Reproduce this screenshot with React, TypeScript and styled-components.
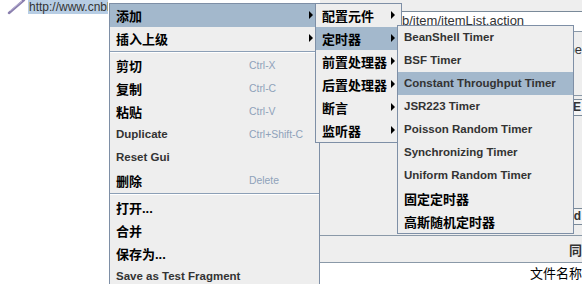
import React from "react";
import styled, { createGlobalStyle } from "styled-components";

const GlobalStyle = createGlobalStyle`
  html, body {
    margin: 0;
    padding: 0;
    background: #ffffff;
  }
  body {
    font-family: "Liberation Sans", "Noto Sans CJK SC", sans-serif;
  }
`;

const Screen = styled.div`
  position: relative;
  width: 582px;
  height: 284px;
  overflow: hidden;
  display: grid;
  grid-template-columns: 320px 262px;
  background: #ffffff;
`;

const LeftPane = styled.div`
  display: flex;
  flex-direction: column;
  background: #ffffff;
`;

const TopLine = styled.div`
  display: flex;
  align-items: center;
  height: 14px;
`;

const IconSlot = styled.div`
  width: 28px;
  height: 14px;
  flex: 0 0 28px;
`;

const UrlSelection = styled.div`
  width: 80px;
  height: 14px;
  overflow: hidden;
  padding-left: 1px;
  box-sizing: border-box;
  background: #b7cde4;
  color: #333333;
  font-size: 12px;
  line-height: 14px;
  white-space: nowrap;
`;

const RightPane = styled.div`
  display: flex;
  flex-direction: column;
  background: #eeeeee;
`;

const Strip = styled.div<{ $h: number }>`
  height: ${(p) => p.$h}px;
  flex: 0 0 ${(p) => p.$h}px;
  display: flex;
  align-items: center;
  justify-content: flex-end;
  overflow: hidden;
  color: #333333;
  font-size: 13px;
  white-space: nowrap;
`;

const UrlField = styled.div`
  height: 19px;
  flex: 0 0 19px;
  border-top: 1px solid #7a8a99;
  background: #ffffff;
  padding-left: 82px;
  color: #333333;
  font-size: 13px;
  line-height: 18px;
  white-space: nowrap;
`;

const Rule = styled.div`
  height: 0;
  border-top: 1px solid #8a99a8;
`;

const SmallBox = styled.span`
  display: inline-flex;
  align-items: center;
  height: 15px;
  padding: 0 2px;
  margin-right: -2px;
  border: 1px solid #7a8a99;
  background: #f4f4f4;
  font-size: 12px;
  font-weight: bold;
  color: #333333;
`;

const Filler = styled.div`
  flex: 1;
`;

const Footer = styled.div`
  flex: 0 0 21px;
  height: 21px;
  background: #ffffff;
  border-top: 1px solid #8a99a8;
  padding-left: 210px;
  font-size: 13px;
  line-height: 21px;
  color: #000000;
  white-space: nowrap;
`;

const Menu = styled.div<{ $x: number; $y: number; $w: number }>`
  position: absolute;
  left: ${(p) => p.$x}px;
  top: ${(p) => p.$y}px;
  width: ${(p) => p.$w}px;
  box-sizing: border-box;
  background: #eeeeee;
  border: 1px solid #7e8fa6;
  display: flex;
  flex-direction: column;
`;

const Item = styled.div<{ $active?: boolean }>`
  height: 23px;
  flex: 0 0 23px;
  box-sizing: border-box;
  display: flex;
  align-items: center;
  padding: 0 6px 1px;
  background: ${(p) => (p.$active ? "#a3b8cc" : "transparent")};
`;

const Label = styled.span<{ $cjk?: boolean; $w?: number }>`
  flex: ${(p) => (p.$w ? `0 0 ${p.$w}px` : "1")};
  font-weight: bold;
  font-size: ${(p) => (p.$cjk ? "13px" : "11.5px")};
  color: ${(p) => (p.$cjk ? "#000000" : "#333333")};
  white-space: nowrap;
`;

const Accel = styled.span`
  flex: 1;
  font-size: 10.4px;
  color: #8fa2ba;
  white-space: nowrap;
`;

const Arrow = styled.span`
  width: 0;
  height: 0;
  border-top: 4px solid transparent;
  border-bottom: 4px solid transparent;
  border-left: 4px solid #000000;
`;

const Separator = styled.div`
  height: 0;
  margin: 1px 0 1px;
  border-top: 1px solid #8c9fb6;
  border-bottom: 1px solid #ffffff;
`;

const Pencil = () => (
  <svg width="28" height="16" viewBox="0 0 28 16" style={{ position: "absolute", left: 0, top: 0 }}>
    <line x1="9" y1="13" x2="24" y2="0" stroke="#8a7fae" strokeWidth="2.4" strokeLinecap="round" />
    <line x1="10" y1="11" x2="22" y2="1" stroke="#c9c2e0" strokeWidth="0.8" />
  </svg>
);

type Entry =
  | { sep: true }
  | { label: string; cjk?: boolean; accel?: string; sub?: boolean; active?: boolean };

const mainMenu: Entry[] = [
  { label: "添加", cjk: true, sub: true, active: true },
  { label: "插入上级", cjk: true, sub: true },
  { sep: true },
  { label: "剪切", cjk: true, accel: "Ctrl-X" },
  { label: "复制", cjk: true, accel: "Ctrl-C" },
  { label: "粘贴", cjk: true, accel: "Ctrl-V" },
  { label: "Duplicate", accel: "Ctrl+Shift-C" },
  { label: "Reset Gui" },
  { label: "删除", cjk: true, accel: "Delete" },
  { sep: true },
  { label: "打开...", cjk: true },
  { label: "合并", cjk: true },
  { label: "保存为...", cjk: true },
  { label: "Save as Test Fragment" },
];

const addMenu: Entry[] = [
  { label: "配置元件", cjk: true, sub: true },
  { label: "定时器", cjk: true, sub: true, active: true },
  { label: "前置处理器", cjk: true, sub: true },
  { label: "后置处理器", cjk: true, sub: true },
  { label: "断言", cjk: true, sub: true },
  { label: "监听器", cjk: true, sub: true },
];

const timerMenu: Entry[] = [
  { label: "BeanShell Timer" },
  { label: "BSF Timer" },
  { label: "Constant Throughput Timer", active: true },
  { label: "JSR223 Timer" },
  { label: "Poisson Random Timer" },
  { label: "Synchronizing Timer" },
  { label: "Uniform Random Timer" },
  { label: "固定定时器", cjk: true },
  { label: "高斯随机定时器", cjk: true },
];

const PopupMenu: React.FC<{ items: Entry[]; x: number; y: number; w: number }> = ({
  items,
  x,
  y,
  w,
}) => (
  <Menu $x={x} $y={y} $w={w}>
    {items.map((it, i) => {
      if ("sep" in it) return <Separator key={i} />;
      return (
        <Item key={i} $active={it.active}>
          <Label $cjk={it.cjk} $w={it.accel ? 133 : undefined}>
            {it.label}
          </Label>
          {it.accel && <Accel>{it.accel}</Accel>}
          {it.sub && <Arrow />}
        </Item>
      );
    })}
  </Menu>
);

export default function App() {
  return (
    <>
      <GlobalStyle />
      <Screen>
        <LeftPane>
          <TopLine>
            <IconSlot />
            <UrlSelection>http://www.cnbl</UrlSelection>
          </TopLine>
        </LeftPane>
        <RightPane>
          <Strip $h={11} />
          <UrlField>b/item/itemList.action</UrlField>
          <Rule />
          <Strip $h={34}>Type</Strip>
          <Strip $h={29} />
          <Rule />
          <Strip $h={22}>
            <SmallBox>E</SmallBox>
          </Strip>
          <Strip $h={86} />
          <Strip $h={24}>
            <SmallBox>d</SmallBox>
          </Strip>
          <Filler />
          <Rule />
          <Strip $h={26}>
            <b>同</b>
          </Strip>
          <Footer>文件名称</Footer>
        </RightPane>
        <Pencil />
        <PopupMenu items={mainMenu} x={109} y={3} w={211} />
        <PopupMenu items={addMenu} x={315} y={3} w={87} />
        <PopupMenu items={timerMenu} x={397} y={25} w={177} />
      </Screen>
    </>
  );
}
